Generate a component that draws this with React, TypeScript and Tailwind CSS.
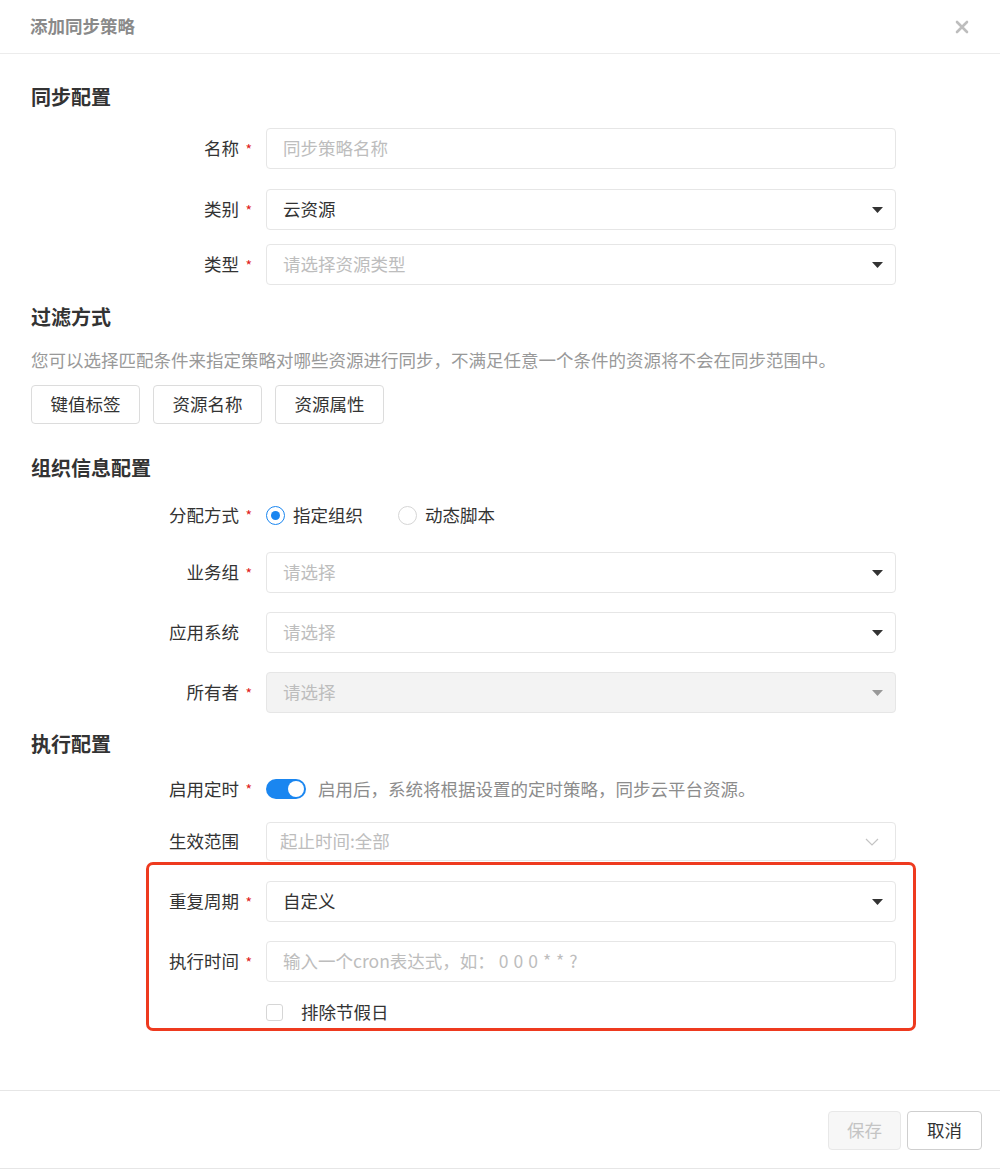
import React from "react";

const FONT = { fontFamily: '"Noto Sans CJK SC", "Noto Sans", sans-serif' };

function Caret({ color = "#333" }: { color?: string }) {
  return (
    <svg width="11" height="6" viewBox="0 0 11 6" className="shrink-0">
      <path d="M0 0 H11 L5.5 6 Z" fill={color} />
    </svg>
  );
}

function Label({ text, required, inBox }: { text: string; required?: boolean; inBox?: boolean }) {
  return (
    <div className={`flex items-center justify-end shrink-0 pr-[12px] ${inBox ? "w-[117px]" : "w-[235px]"}`}>
      <span className="text-[17.5px] text-[#333]">{text}</span>
      <span className={`w-[15px] text-right pr-[2px] text-[14px] leading-none text-[#e02020] ${required ? "" : "invisible"}`}>*</span>
    </div>
  );
}

function Field({
  label,
  required,
  value,
  placeholder,
  select,
  disabled,
  inBox,
  className = "",
}: {
  label: string;
  required?: boolean;
  value?: string;
  placeholder?: string;
  select?: boolean;
  disabled?: boolean;
  inBox?: boolean;
  className?: string;
}) {
  return (
    <div className={`flex items-center ${className}`}>
      <Label text={label} required={required} inBox={inBox} />
      <div
        className={`w-[630px] h-[41px] flex items-center justify-between pl-4 pr-[12px] rounded-[4px] border border-[#e6e6e6] ${
          disabled ? "bg-[#f3f3f3]" : "bg-white"
        }`}
      >
        <span className={`text-[17.5px] whitespace-pre ${value ? "text-[#333]" : "text-[#bdbdbd]"}`}>{value ?? placeholder}</span>
        {select && <Caret color={disabled ? "#999" : "#333"} />}
      </div>
    </div>
  );
}

function Heading({ children, className = "" }: { children: React.ReactNode; className?: string }) {
  return <h2 className={`text-[20px] leading-[28px] font-bold text-[#333] ${className}`}>{children}</h2>;
}

export default function App() {
  return (
    <div style={FONT} className="w-[1000px] h-[1171px] bg-white flex flex-col">
      {/* Header */}
      <div className="h-[54px] shrink-0 flex items-center justify-between pl-[30px] pr-[31px] border-b border-[#ececec]">
        <span className="text-[17.5px] font-bold text-[#8a8a8a]">添加同步策略</span>
        <svg width="14" height="14" viewBox="0 0 14 14">
          <path d="M2 2 L12 12 M12 2 L2 12" stroke="#bdbdbd" strokeWidth="2.6" strokeLinecap="round" />
        </svg>
      </div>

      {/* Body */}
      <div className="flex-1 pl-[31px]">
        <Heading className="mt-[29px]">同步配置</Heading>
        <Field label="名称" required placeholder="同步策略名称" className="mt-[17px]" />
        <Field label="类别" required value="云资源" select className="mt-[20px]" />
        <Field label="类型" required placeholder="请选择资源类型" select className="mt-[14px]" />

        <Heading className="mt-[18px]">过滤方式</Heading>
        <p className="mt-[17px] text-[17.5px] leading-[24px] text-[#999]">
          您可以选择匹配条件来指定策略对哪些资源进行同步，不满足任意一个条件的资源将不会在同步范围中。
        </p>
        <div className="mt-[13px] flex gap-[13px]">
          {["键值标签", "资源名称", "资源属性"].map((t) => (
            <button
              key={t}
              className="h-[39px] w-[109px] rounded-[4px] border border-[#dcdcdc] bg-white text-[17.5px] text-[#333]"
            >
              {t}
            </button>
          ))}
        </div>

        <Heading className="mt-[30px]">组织信息配置</Heading>
        <div className="mt-[21px] flex items-center h-[24px]">
          <Label text="分配方式" required />
          <div className="flex items-center">
            <span className="w-[19px] h-[19px] rounded-full border-[1.5px] border-[#1a86f0] flex items-center justify-center">
              <span className="w-[9px] h-[9px] rounded-full bg-[#1a86f0]" />
            </span>
            <span className="ml-[8px] text-[17.5px] text-[#333]">指定组织</span>
            <span className="ml-[35px] w-[19px] h-[19px] rounded-full border border-[#d6d6d6]" />
            <span className="ml-[8px] text-[17.5px] text-[#333]">动态脚本</span>
          </div>
        </div>
        <Field label="业务组" required placeholder="请选择" select className="mt-[25px]" />
        <Field label="应用系统" placeholder="请选择" select className="mt-[19px]" />
        <Field label="所有者" required placeholder="请选择" select disabled className="mt-[19px]" />

        <Heading className="mt-[17px]">执行配置</Heading>
        <div className="mt-[19px] flex items-center h-[24px]">
          <Label text="启用定时" required />
          <span className="w-[40px] h-[20px] rounded-full bg-[#1a86f0] flex items-center justify-end pr-[2px]">
            <span className="w-[16px] h-[16px] rounded-full bg-white" />
          </span>
          <span className="ml-[12px] text-[17.5px] text-[#8c8c8c]">启用后，系统将根据设置的定时策略，同步云平台资源。</span>
        </div>
        <div className="mt-[21px] flex items-center">
          <Label text="生效范围" />
          <div className="w-[630px] h-[39px] flex items-center justify-between pl-[13px] pr-[16px] rounded-[4px] border border-[#e6e6e6]">
            <span className="text-[17.5px] text-[#bdbdbd]">起止时间:全部</span>
            <svg width="14" height="8" viewBox="0 0 14 8">
              <path d="M1 1 L7 7 L13 1" fill="none" stroke="#c4c4c4" strokeWidth="1.2" />
            </svg>
          </div>
        </div>

        {/* highlighted block */}
        <div className="mt-[1px] ml-[115px] w-[770px] h-[169px] border-[3px] border-[#ee3a1f] rounded-[7px] pt-[16px]">
          <Field inBox label="重复周期" required value="自定义" select />
          <Field
            inBox
            label="执行时间"
            required
            placeholder={"输入一个cron表达式，如： 0\u200a 0\u200a 0\u200a *\u200a *\u200a ?"}
            className="mt-[19px]"
          />
          <div className="mt-[20px] flex items-center h-[20px]">
            <div className="w-[117px] shrink-0" />
            <span className="w-[17px] h-[17px] rounded-[3px] border border-[#d6d6d6] bg-white" />
            <span className="ml-[18px] text-[17.5px] text-[#333]">排除节假日</span>
          </div>
        </div>
      </div>

      {/* Footer */}
      <div className="h-[79px] shrink-0 border-t border-b border-[#e6e6e6] flex justify-end items-start pt-[20px] pr-[18px] gap-[6px]">
        <button className="h-[39px] w-[73px] rounded-[4px] border border-[#e8e8e8] bg-[#f7f7f7] text-[17.5px] text-[#c4c4c4]">
          保存
        </button>
        <button className="h-[39px] w-[75px] rounded-[4px] border border-[#cfcfcf] bg-white text-[17.5px] text-[#333]">
          取消
        </button>
      </div>
      <div className="h-[2px] shrink-0" />
    </div>
  );
}
